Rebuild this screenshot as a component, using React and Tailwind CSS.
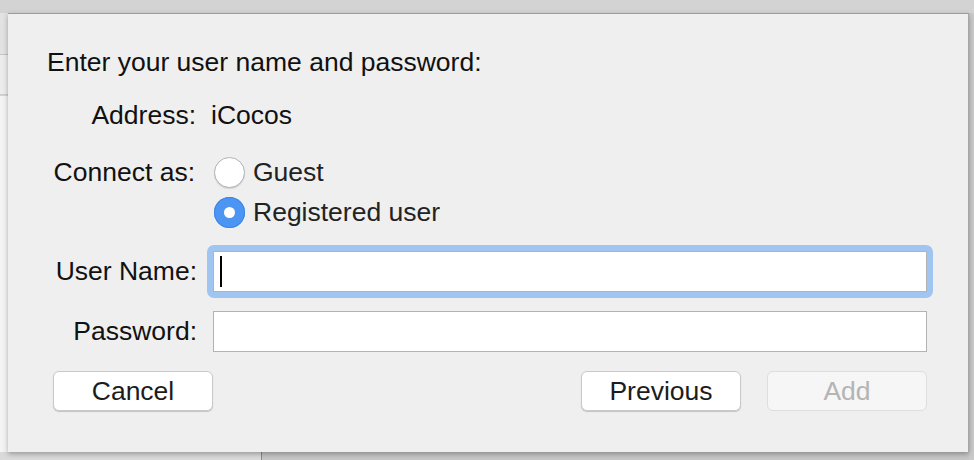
import React from 'react';

function Radio({ checked }) {
    if (checked) {
        return (
            <div className="w-[31px] h-[31px] rounded-full bg-[#4d95f2] flex items-center justify-center shrink-0 shadow-[inset_0_0_0_1px_#3f86e6]">
                <div className="w-[11px] h-[11px] rounded-full bg-white"></div>
            </div>
        );
    }
    return (
        <div className="w-[31px] h-[31px] rounded-full bg-white border border-[#b4b4b4] shadow-[0_1px_1px_rgba(0,0,0,0.12)] shrink-0"></div>
    );
}

function Button({ children, disabled, className = '' }) {
    return (
        <div
            className={`w-[160px] h-[40px] rounded-[6px] flex items-center justify-center text-[26.5px] leading-none ${
                disabled
                    ? 'bg-[#f6f6f6] border border-[#dedede] text-[#b4b4b4]'
                    : 'bg-white border border-[#c9c9c9] text-[#1c1c1c] shadow-[0_1px_1px_rgba(0,0,0,0.18)]'
            } ${className}`}
        >
            {children}
        </div>
    );
}

export default function App() {
    const [mode, setMode] = React.useState('registered');

    return (
        <div
            className="w-[974px] h-[460px] relative overflow-hidden bg-[#d3d3d3]"
            style={{ fontFamily: '"Liberation Sans", Arial, sans-serif' }}
        >
            {/* window behind the sheet */}
            <div className="absolute left-0 top-[13px] w-[8px] h-[42px] bg-[#e2e2e2] border-b border-[#c4c4c4]"></div>
            <div className="absolute left-0 top-[55px] w-[8px] h-[40px] bg-[#ececec] border-b border-[#cfcfcf]"></div>
            <div className="absolute left-0 top-[96px] w-[8px] h-[364px] bg-[#f4f4f4]"></div>
            <div className="absolute left-0 top-[452px] w-[261px] h-[8px] bg-[#dadada]"></div>
            <div className="absolute left-[261px] top-[452px] w-[1px] h-[8px] bg-[#8a8a8a]"></div>
            <div className="absolute left-[262px] top-[452px] w-[712px] h-[8px] bg-[#c6c6c6]"></div>
            <div className="absolute left-[969px] top-[13px] w-[5px] h-[447px] bg-[#cacaca]"></div>

            {/* sheet dialog */}
            <div className="absolute left-[8px] top-[13px] w-[961px] h-[439px] bg-[#efefef] border-t border-[#9c9c9c] border-r border-r-[#a6a6a6] shadow-[0_2px_5px_rgba(0,0,0,0.3)] flex flex-col text-[26.5px]">
                <div className="pt-[32px] pl-[39px] leading-[32px] text-[#111]">
                    Enter your user name and password:
                </div>

                <div className="mt-[22px] h-[32px] flex items-center text-[#111]">
                    <div className="w-[188px] text-right">Address:</div>
                    <div className="ml-[15px]">iCocos</div>
                </div>

                <div className="mt-[20px] h-[40px] flex items-center text-[#111]">
                    <div className="w-[187px] text-right mt-[2px]">Connect as:</div>
                    <div className="ml-[19px] flex items-center cursor-pointer" onClick={() => setMode('guest')}>
                        <Radio checked={mode === 'guest'} />
                        <span className="ml-[8px] mt-[2px] text-[#222]">Guest</span>
                    </div>
                </div>

                <div className="h-[40px] flex items-center text-[#111]">
                    <div className="w-[187px]"></div>
                    <div className="ml-[19px] flex items-center cursor-pointer" onClick={() => setMode('registered')}>
                        <Radio checked={mode === 'registered'} />
                        <span className="ml-[8px] mt-[2px] text-[#222]">Registered user</span>
                    </div>
                </div>

                <div className="mt-[19px] h-[41px] flex items-center text-[#111]">
                    <div className="w-[189px] text-right mt-[1px]">User Name:</div>
                    <div className="ml-[10px] -my-[6px] p-[6px] rounded-[7px] bg-[#a1c5f1]">
                        <div className="w-[714px] h-[41px] bg-white border border-[#b3b3b3] flex items-center">
                            <div className="ml-[6px] w-[2px] h-[31px] bg-black"></div>
                        </div>
                    </div>
                </div>

                <div className="mt-[19px] h-[41px] flex items-center text-[#111]">
                    <div className="w-[189px] text-right mt-[1px]">Password:</div>
                    <div className="ml-[16px] w-[714px] h-[41px] bg-white border border-[#b3b3b3]"></div>
                </div>

                <div className="mt-[19px] flex items-center pl-[45px]">
                    <Button>Cancel</Button>
                    <Button className="ml-auto">Previous</Button>
                    <Button disabled className="ml-[26px] mr-[41px]">Add</Button>
                </div>
            </div>
        </div>
    );
}
